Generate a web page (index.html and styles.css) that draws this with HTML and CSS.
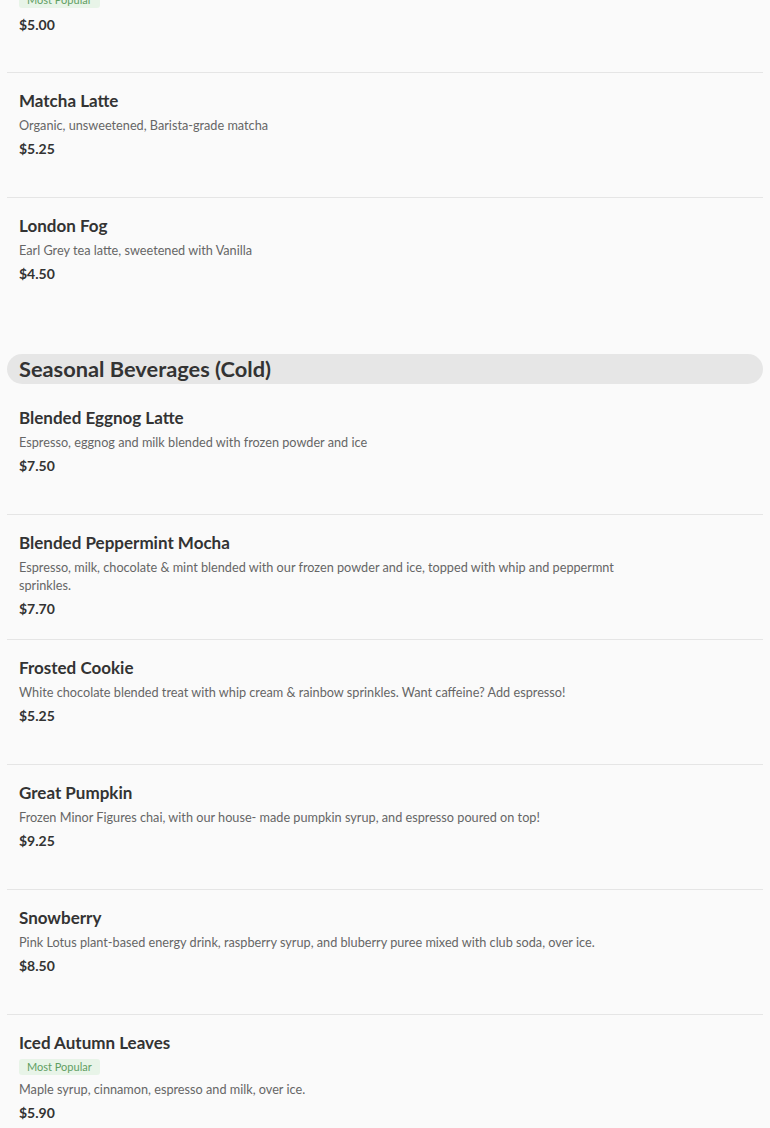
FILE: index.html
```html
<!DOCTYPE html>
<html lang="en">
<head>
<meta charset="utf-8">
<title>Menu</title>
<link rel="stylesheet" href="styles.css">
</head>
<body>
<main class="menu">
  <section class="section section-first">
    <div class="item">
      <h3 class="item-name">Chai Latte</h3>
      <span class="badge">Most Popular</span>
      <div class="item-price">$5.00</div>
    </div>
    <div class="item">
      <h3 class="item-name">Matcha Latte</h3>
      <p class="item-desc">Organic, unsweetened, Barista-grade matcha</p>
      <div class="item-price">$5.25</div>
    </div>
    <div class="item">
      <h3 class="item-name">London Fog</h3>
      <p class="item-desc">Earl Grey tea latte, sweetened with Vanilla</p>
      <div class="item-price">$4.50</div>
    </div>
  </section>

  <section class="section">
    <h2 class="section-title">Seasonal Beverages (Cold)</h2>
    <div class="item">
      <h3 class="item-name">Blended Eggnog Latte</h3>
      <p class="item-desc">Espresso, eggnog and milk blended with frozen powder and ice</p>
      <div class="item-price">$7.50</div>
    </div>
    <div class="item">
      <h3 class="item-name">Blended Peppermint Mocha</h3>
      <p class="item-desc">Espresso, milk, chocolate &amp; mint blended with our frozen powder and ice, topped with whip and peppermnt sprinkles.</p>
      <div class="item-price">$7.70</div>
    </div>
    <div class="item">
      <h3 class="item-name">Frosted Cookie</h3>
      <p class="item-desc">White chocolate blended treat with whip cream &amp; rainbow sprinkles. Want caffeine? Add espresso!</p>
      <div class="item-price">$5.25</div>
    </div>
    <div class="item">
      <h3 class="item-name">Great Pumpkin</h3>
      <p class="item-desc">Frozen Minor Figures chai, with our house- made pumpkin syrup, and espresso poured on top!</p>
      <div class="item-price">$9.25</div>
    </div>
    <div class="item">
      <h3 class="item-name">Snowberry</h3>
      <p class="item-desc">Pink Lotus plant-based energy drink, raspberry syrup, and bluberry puree mixed with club soda, over ice.</p>
      <div class="item-price">$8.50</div>
    </div>
    <div class="item">
      <h3 class="item-name">Iced Autumn Leaves</h3>
      <span class="badge">Most Popular</span>
      <p class="item-desc">Maple syrup, cinnamon, espresso and milk, over ice.</p>
      <div class="item-price">$5.90</div>
    </div>
  </section>
</main>
</body>
</html>
```

FILE: styles.css
```css
* { box-sizing: border-box; }

html, body {
  margin: 0;
  padding: 0;
  background: #fafafa;
}

body {
  font-family: "Lato", "Open Sans", sans-serif;
  color: #333333;
  overflow: hidden;
}

.menu {
  padding: 0 7px;
  margin-top: -52px;
}

.section {
  display: flex;
  flex-direction: column;
}

.section + .section {
  margin-top: 31px;
}

.section-title {
  margin: 0 0 6px;
  height: 30px;
  line-height: 29px;
  padding: 0 12px;
  border-radius: 15px;
  background: #e6e6e6;
  font-size: 21.8px;
  font-weight: 700;
  color: #333333;
}

.item {
  min-height: 125px;
  padding: 16px 12px 12px;
  border-bottom: 1px solid #e5e5e5;
  display: flex;
  flex-direction: column;
  align-items: flex-start;
}

.item:last-child {
  border-bottom: none;
}

.item-name {
  margin: 0 0 3px;
  font-size: 17px;
  line-height: 24px;
  font-weight: 700;
  color: #333333;
}

.badge {
  margin: 1px 0 5px;
  height: 16px;
  line-height: 16px;
  padding: 0 8px;
  border-radius: 3px;
  background: #e8f4e8;
  color: #5f9e62;
  font-size: 11px;
}

.badge + .item-price {
  margin-top: 3px;
}

.item-desc {
  margin: 0;
  max-width: 610px;
  font-size: 12.7px;
  line-height: 18px;
  color: #666666;
}

.item-price {
  margin-top: 6px;
  font-size: 14px;
  line-height: 18px;
  font-weight: 700;
  color: #333333;
}
```
